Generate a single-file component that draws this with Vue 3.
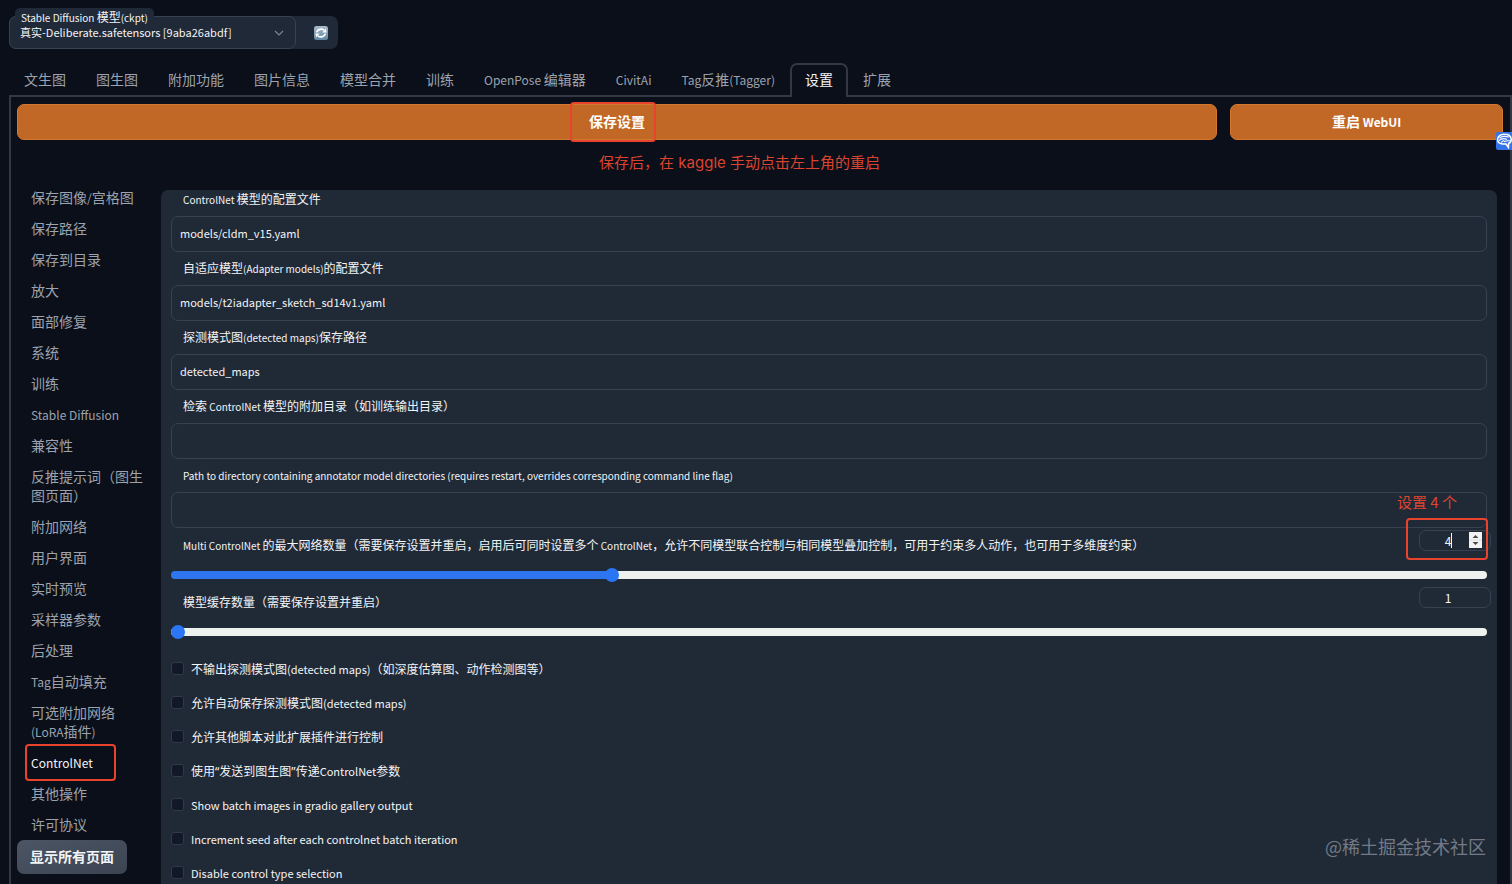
<template>
  <div class="app">
    <header class="quick">
      <div class="ckpt">
        <label for="ckpt" class="ckpt-label"><MixedText text="Stable Diffusion 模型(ckpt)" /></label>
        <select id="ckpt" v-model="checkpoint" class="ckpt-select">
          <option>真实-Deliberate.safetensors [9aba26abdf]</option>
        </select>
        <svg class="chevron" width="10" height="6" viewBox="0 0 10 6">
          <path d="M1 1 L5 5 L9 1" fill="none" stroke="#7d8592" stroke-width="1.2" />
        </svg>
      </div>
      <button class="refresh" aria-label="刷新">
        <svg width="14" height="14" viewBox="0 0 14 14">
          <defs>
            <linearGradient id="refreshBg" x1="0" y1="0" x2="0" y2="1">
              <stop offset="0" stop-color="#a9bccb" />
              <stop offset="1" stop-color="#5f87a3" />
            </linearGradient>
          </defs>
          <rect width="14" height="14" rx="2.5" fill="url(#refreshBg)" />
          <path d="M2.6 6.4 A4.5 4.2 0 0 1 10 4.2" fill="none" stroke="#fff" stroke-width="1.7" />
          <path d="M11.4 7.6 A4.5 4.2 0 0 1 4 9.8" fill="none" stroke="#fff" stroke-width="1.7" />
          <path d="M8.4 6.4 L12.6 6.6 L11.8 2.6 Z M5.6 7.6 L1.4 7.4 L2.2 11.4 Z" fill="#fff" />
        </svg>
      </button>
    </header>

    <nav class="tabs">
      <button v-for="tab in tabs" :key="tab" class="tab" :class="{ active: tab === activeTab }" @click="activeTab = tab"><MixedText :text="tab" /></button>
    </nav>

    <main class="settings">
      <div class="actions">
        <div class="save">
          <button class="primary">保存设置</button>
          <span class="mark mark-save"></span>
          <span class="note note-save">保存后，在 kaggle 手动点击左上角的重启</span>
        </div>
        <button class="primary"><MixedText text="重启 WebUI" /></button>
        <span class="helper">
          <svg width="16" height="18" viewBox="0 0 16 18">
            <rect width="20" height="18" rx="2" fill="#3574e8" />
            <path d="M8.5 2.2 C4.5 2 1.6 4.2 1.6 7.6 C1.6 10.6 4 12 7 12 L10 12 L12.4 15.4 L12.6 11.4 C14.6 10.6 15.4 9 15.2 7 C14.8 4 12 2.2 8.5 2.2 Z" fill="none" stroke="#fff" stroke-width="1.5" />
            <path d="M3.5 6 C6 3.6 9 4 13 5 M3 8.6 C5 6.4 8 6.2 11 7.4 M8 9.8 C10 8.6 12 8.6 14.4 8.8 M5 10.4 L8 8.4" fill="none" stroke="#fff" stroke-width="1.1" />
          </svg>
        </span>
      </div>

      <div class="body">
        <aside class="side">
          <button v-for="item in sections" :key="item" class="side-item" :class="{ active: item === activeSection }" @click="activeSection = item">
            <MixedText :text="item" />
            <span v-if="item === 'ControlNet'" class="mark mark-side"></span>
          </button>
          <button class="show-all">显示所有页面</button>
        </aside>

        <section class="panel">
          <div v-for="(field, i) in fields" :key="field.label" class="field">
            <label :for="'field' + i"><MixedText :text="field.label" /></label>
            <input :id="'field' + i" v-model="field.value" type="text" />
          </div>

          <div v-for="(slider, i) in sliders" :key="slider.label" class="slider">
            <div class="slider-head">
              <label :for="'slider' + i"><MixedText :text="slider.label" /></label>
              <div class="number">
                <input v-model="slider.value" type="number" :min="slider.min" :max="slider.max" :aria-label="slider.label" />
                <template v-if="slider.focused">
                  <span class="caret"></span>
                  <svg class="spin" width="13" height="16" viewBox="0 0 13 16">
                    <rect width="13" height="16" fill="#f2f2f2" />
                    <path d="M3.5 6 L6.5 3 L9.5 6 Z M3.5 10 L6.5 13 L9.5 10 Z" fill="#4a4a4a" />
                    <path d="M0 8 H13" stroke="#dcdcdc" stroke-width="1" />
                  </svg>
                  <span class="mark mark-number"></span>
                  <span class="note note-number">设置 4 个</span>
                </template>
              </div>
            </div>
            <input :id="'slider' + i" v-model="slider.value" class="range" type="range" :min="slider.min" :max="slider.max" :style="{ '--fill': fill(slider) }" />
          </div>

          <div class="checks">
            <label v-for="check in checks" :key="check.label" class="check">
              <input v-model="check.value" type="checkbox" />
              <span><MixedText :text="check.label" /></span>
            </label>
          </div>
        </section>
      </div>
    </main>

    <span class="watermark">@稀土掘金技术社区</span>
  </div>
</template>

<script setup>
import { h, ref } from 'vue'

// latin runs and curly quotes get their own size / face next to the chinese text
const MixedText = (props) =>
  props.text
    .split(/([\x20-\x7e]+|[“”])/)
    .filter(Boolean)
    .map((part) => {
      if (/[“”]/.test(part)) return h('span', { class: 'quote' }, part)
      if (/[\x20-\x7e]/.test(part)) return h('span', { class: 'latin' }, part)
      return part
    })
MixedText.props = ['text']

const checkpoint = ref('真实-Deliberate.safetensors [9aba26abdf]')
const activeTab = ref('设置')
const activeSection = ref('ControlNet')

const tabs = ['文生图', '图生图', '附加功能', '图片信息', '模型合并', '训练', 'OpenPose 编辑器', 'CivitAi', 'Tag反推(Tagger)', '设置', '扩展']

const sections = [
  '保存图像/宫格图',
  '保存路径',
  '保存到目录',
  '放大',
  '面部修复',
  '系统',
  '训练',
  'Stable Diffusion',
  '兼容性',
  '反推提示词（图生图页面）',
  '附加网络',
  '用户界面',
  '实时预览',
  '采样器参数',
  '后处理',
  'Tag自动填充',
  '可选附加网络(LoRA插件)',
  'ControlNet',
  '其他操作',
  '许可协议'
]

const fields = ref([
  { label: 'ControlNet 模型的配置文件', value: 'models/cldm_v15.yaml' },
  { label: '自适应模型(Adapter models)的配置文件', value: 'models/t2iadapter_sketch_sd14v1.yaml' },
  { label: '探测模式图(detected maps)保存路径', value: 'detected_maps' },
  { label: '检索 ControlNet 模型的附加目录（如训练输出目录）', value: '' },
  { label: 'Path to directory containing annotator model directories (requires restart, overrides corresponding command line flag)', value: '' }
])

const sliders = ref([
  {
    label: 'Multi ControlNet 的最大网络数量（需要保存设置并重启，启用后可同时设置多个 ControlNet，允许不同模型联合控制与相同模型叠加控制，可用于约束多人动作，也可用于多维度约束）',
    value: 4,
    min: 1,
    max: 10,
    focused: true
  },
  { label: '模型缓存数量（需要保存设置并重启）', value: 1, min: 1, max: 5, focused: false }
])

const checks = ref([
  { label: '不输出探测模式图(detected maps)（如深度估算图、动作检测图等）', value: false },
  { label: '允许自动保存探测模式图(detected maps)', value: false },
  { label: '允许其他脚本对此扩展插件进行控制', value: false },
  { label: '使用“发送到图生图”传递ControlNet参数', value: false },
  { label: 'Show batch images in gradio gallery output', value: false },
  { label: 'Increment seed after each controlnet batch iteration', value: false },
  { label: 'Disable control type selection', value: false }
])

const fill = (s) => ((s.value - s.min) / (s.max - s.min)) * 100 + '%'
</script>

<style>
body {
  background: #0b0f19;
}
.latin {
  font-size: 10px;
  line-height: 1;
}
.tab .latin,
.side-item .latin,
.primary .latin {
  font-size: 12px;
}
.check .latin {
  font-size: 11px;
}
.quote {
  font-family: "Noto Sans", sans-serif;
  line-height: 1;
}
</style>

<style scoped>
.app {
  position: relative;
  box-sizing: border-box;
  height: 100vh;
  overflow: hidden;
  padding: 16px 0 0 9px;
  display: flex;
  flex-direction: column;
  background: #0b0f19;
  color: #f3f4f6;
  font-family: "Noto Sans CJK SC", sans-serif;
  font-size: 12px;
}
button,
input,
select {
  box-sizing: border-box;
  margin: 0;
  font-family: inherit;
  color: inherit;
}
button {
  border: none;
  background: none;
  cursor: pointer;
}
.quick {
  display: flex;
  flex-shrink: 0;
  align-self: flex-start;
  height: 33px;
  border-radius: 7px;
  background: #1f2937;
}
.ckpt {
  position: relative;
  width: 287px;
}
.ckpt-label {
  position: absolute;
  z-index: 1;
  left: 6px;
  top: -8px;
  padding: 0 6px;
  line-height: 18px;
  border-radius: 5px 5px 0 0;
  background: #1f2937;
}
.ckpt-select {
  appearance: none;
  width: 100%;
  height: 33px;
  padding: 0 10px 1px;
  border: 1px solid #374151;
  border-radius: 7px;
  background: #1f2937;
  font-size: 11px;
}
.chevron {
  position: absolute;
  right: 12px;
  top: 14px;
}
.refresh {
  display: flex;
  align-items: center;
  padding: 0 10px 0 18px;
}
.tabs {
  display: flex;
  flex-shrink: 0;
  margin-top: 14px;
  border-bottom: 2px solid #343842;
}
.tab {
  height: 34px;
  margin-bottom: -2px;
  padding: 0 13px 4px;
  border: 2px solid transparent;
  border-bottom: none;
  border-radius: 7px 7px 0 0;
  font-size: 14px;
  line-height: 20px;
  color: #9ca3af;
}
.tab.active {
  border-color: #343842;
  background: #0b0f19;
  color: #f3f4f6;
}
.settings {
  flex: 1;
  padding: 7px 7px 0 6px;
  border: 2px solid #343842;
  border-width: 0 2px;
}
.actions {
  position: relative;
  display: grid;
  grid-template-columns: 22fr 5fr;
  gap: 13px;
}
.save {
  position: relative;
}
.primary {
  width: 100%;
  height: 36px;
  padding: 0 0 2px;
  border: 1px solid #d4782f;
  border-radius: 7px;
  background: #c26826;
  color: #fff;
  font-size: 14px;
  font-weight: 700;
}
.mark {
  position: absolute;
  box-sizing: border-box;
  border: 2px solid #e8432c;
  border-radius: 4px;
  pointer-events: none;
}
.mark-save {
  left: calc(50% - 47px);
  top: -2px;
  width: 86px;
  height: 40px;
}
.note {
  position: absolute;
  color: #dc4430;
  font-size: 15px;
  line-height: 24px;
  white-space: nowrap;
}
.note-save {
  left: calc(50% - 18px);
  top: 47px;
  font-family: Inter, "Noto Sans CJK SC", sans-serif;
}
.helper {
  position: absolute;
  right: -9px;
  top: 28px;
  display: flex;
}
.body {
  display: flex;
  align-items: flex-start;
  gap: 14px;
  margin-top: 42px;
}
.side {
  flex: 0 0 130px;
  display: flex;
  flex-direction: column;
  align-items: flex-start;
}
.side-item {
  position: relative;
  padding: 6px 0 6px 14px;
  font-size: 14px;
  line-height: 19px;
  text-align: left;
  color: #9ca3af;
}
.side-item.active {
  color: #f3f4f6;
}
.mark-side {
  left: 8px;
  top: -3px;
  width: 91px;
  height: 37px;
}
.show-all {
  height: 34px;
  padding: 0 13px 2px;
  border-radius: 7px;
  background: linear-gradient(to bottom right, #4b5563, #3c4452);
  font-size: 14px;
  font-weight: 700;
  white-space: nowrap;
}
.panel {
  flex: 1;
  margin: 8px 6px 0 0;
  padding: 0 10px 20px;
  border-radius: 7px;
  background: #202a37;
}
.field {
  padding-bottom: 7px;
}
.field label {
  display: block;
  margin: 0 0 8px 12px;
  line-height: 18px;
}
.field input {
  display: block;
  width: 100%;
  height: 36px;
  padding: 0 8px 2px;
  border: 1px solid #374151;
  border-radius: 7px;
  background: #202a37;
  font-size: 11px;
  outline: none;
}
.field:nth-child(5) {
  padding-bottom: 0;
}
.slider {
  height: 57px;
}
.slider-head {
  display: flex;
  justify-content: space-between;
  height: 40px;
}
.slider-head label {
  margin: 8px 0 0 12px;
  line-height: 18px;
}
.number {
  position: relative;
  width: 72px;
  margin: 2px -4px 0 0;
}
.number input {
  display: block;
  width: 100%;
  height: 21px;
  padding: 0 14px 1px 0;
  border: 1px solid #374151;
  border-radius: 7px;
  background: transparent;
  font-size: 12px;
  text-align: center;
  appearance: textfield;
  outline: none;
}
.number input::-webkit-inner-spin-button {
  appearance: none;
  margin: 0;
}
.caret {
  position: absolute;
  left: 32px;
  top: 3px;
  width: 1px;
  height: 15px;
  background: #f3f4f6;
}
.spin {
  position: absolute;
  right: 9px;
  top: 2px;
}
.mark-number {
  left: -13px;
  top: -12px;
  width: 82px;
  height: 42px;
}
.note-number {
  left: -22px;
  top: -40px;
}
.range {
  appearance: none;
  display: block;
  width: 100%;
  height: 14px;
  background: transparent;
}
.range::-webkit-slider-runnable-track {
  height: 8px;
  border-radius: 4px;
  background: linear-gradient(to right, #2f76ee var(--fill), #eef2ef var(--fill));
}
.range::-webkit-slider-thumb {
  appearance: none;
  width: 14px;
  height: 14px;
  margin-top: -3px;
  border-radius: 50%;
  background: #2a76f4;
}
.checks {
  margin-top: 9px;
}
.check {
  display: flex;
  align-items: center;
  gap: 7px;
  height: 34px;
}
.check input {
  appearance: none;
  width: 13px;
  height: 13px;
  border: 1px solid #303a48;
  border-radius: 3px;
  background: #111827;
}
.check input:checked {
  background: #2a76f4;
}
.watermark {
  position: absolute;
  right: 26px;
  bottom: 25px;
  font-size: 18px;
  line-height: 26px;
  color: #737a85;
}
</style>
